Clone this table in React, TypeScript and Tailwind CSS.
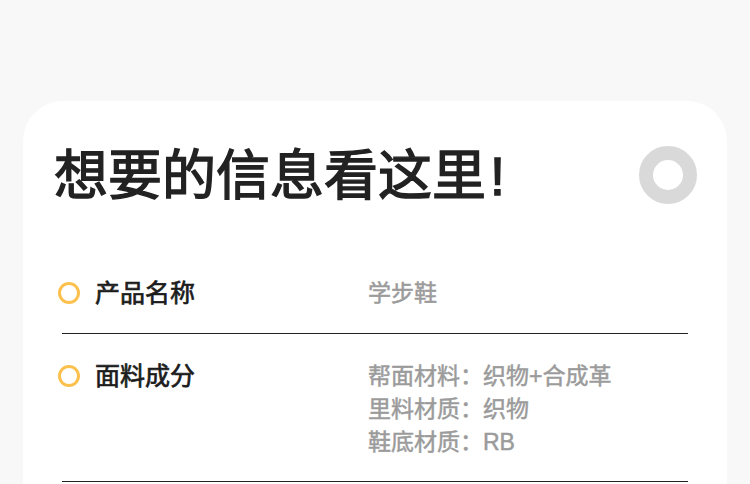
const ROWS = [
  { label: "产品名称", values: ["学步鞋"] },
  { label: "面料成分", values: ["帮面材料：织物+合成革", "里料材质：织物", "鞋底材质：RB"] },
];

export default function App() {
  return (
    <div
      className="h-[484px] overflow-hidden bg-[#f8f8f8] pt-[101px]"
      style={{ fontFamily: '"Liberation Sans", "Noto Sans CJK SC", sans-serif' }}
    >
      <div className="mx-[23px] rounded-[40px] bg-white pt-[47px] pb-10">
        {/* Heading */}
        <div className="flex items-center justify-between pl-[31px] pr-[30px]">
          <h1 className="text-[54px] leading-[56px] text-[#222] [-webkit-text-stroke:1.4px_#222]">
            想要的信息看这里<span className="ml-[4px]">!</span>
          </h1>
          <span className="-mt-[3px] h-[58px] w-[58px] rounded-full border-[14px] border-[#d9d9d9]" />
        </div>

        {/* Info rows */}
        <div className="mt-[73px]">
          {ROWS.map((row) => (
            <div
              key={row.label}
              className="mx-[39px] border-b border-[#222] pt-[26px] pb-[23px] first:pt-0 last:pb-[22px]"
            >
              <div className="-ml-[4px] flex items-start">
                <span className="mt-[5px] h-[22px] w-[22px] shrink-0 rounded-full border-[3.5px] border-[#fcc04d]" />
                <span className="ml-[15px] w-[273px] shrink-0 text-[25px] leading-[33px] text-[#1c1c1c] [-webkit-text-stroke:0.7px_#1c1c1c]">
                  {row.label}
                </span>
                <div className="text-[23px] leading-[33px] text-[#9b9b9b] [-webkit-text-stroke:0.5px_#9b9b9b]">
                  {row.values.map((v) => (
                    <div key={v}>{v}</div>
                  ))}
                </div>
              </div>
            </div>
          ))}
        </div>
      </div>
    </div>
  );
}
